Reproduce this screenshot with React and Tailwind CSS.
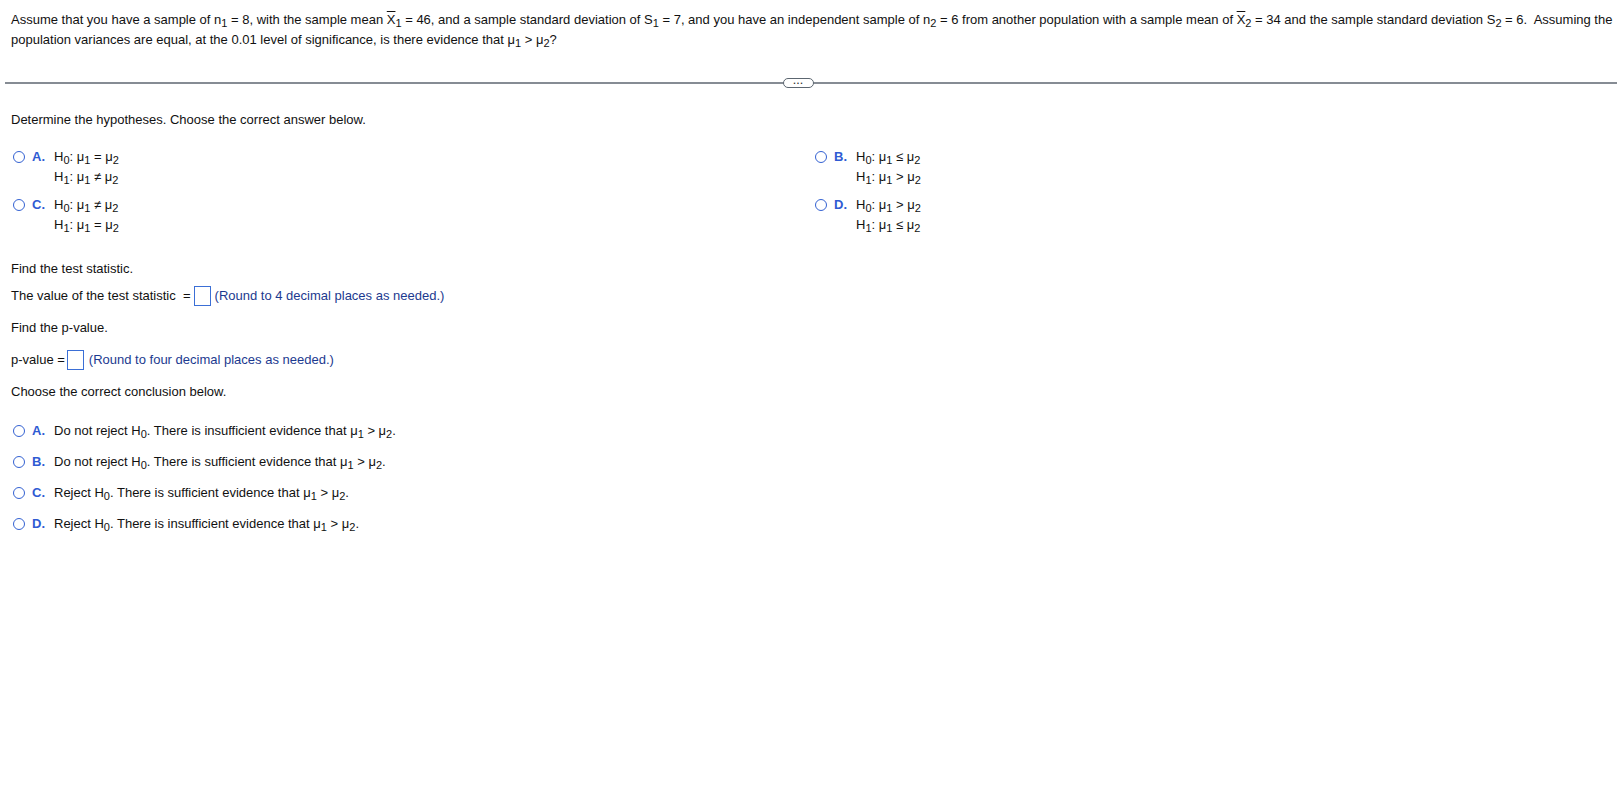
import React from "react";

const F = { fontFamily: '"Liberation Sans", Arial, sans-serif' };

function Sub({ children }) {
  return <sub className="text-[11px]">{children}</sub>;
}

function Mu({ n }) {
  return (
    <span>
      μ<Sub>{n}</Sub>
    </span>
  );
}

function Radio() {
  return (
    <span className="inline-block w-[12px] h-[12px] rounded-full border-[1.5px] border-[#3462d2] bg-white shrink-0" />
  );
}

function Hyp({ letter, h0, h1 }) {
  return (
    <div className="flex items-start">
      <div className="flex items-center h-[20px] pl-[2px]">
        <Radio />
        <span className="ml-[7px] w-[22px] font-bold text-[#2f5bd3]">{letter}.</span>
      </div>
      <div className="flex flex-col">
        <div className="h-[20px] leading-[20px]">
          H<Sub>0</Sub>:&nbsp;<Mu n="1" /> {h0} <Mu n="2" />
        </div>
        <div className="h-[20px] leading-[20px]">
          H<Sub>1</Sub>:&nbsp;<Mu n="1" /> {h1} <Mu n="2" />
        </div>
      </div>
    </div>
  );
}

function Concl({ letter, children }) {
  return (
    <div className="flex items-center h-[20px] pl-[2px]">
      <Radio />
      <span className="ml-[7px] w-[22px] font-bold text-[#2f5bd3]">{letter}.</span>
      <span>{children}</span>
    </div>
  );
}

function Box() {
  return <span className="inline-block w-[17px] h-[20px] border border-[#3b6fd6] bg-white align-middle" />;
}

export default function App() {
  return (
    <div className="w-[1622px] h-[792px] bg-white text-[13px] leading-[20px] text-[#111]" style={F}>
      <div className="pl-[11px] pr-[8px] pt-[10px]">
        <p>
          Assume that you have a sample of n<Sub>1</Sub> = 8, with the sample mean{" "}
          <span className="overline">X</span>
          <Sub>1</Sub> = 46, and a sample standard deviation of S<Sub>1</Sub> = 7, and you have an independent
          sample of n<Sub>2</Sub> = 6 from another population with a sample mean of{" "}
          <span className="overline">X</span>
          <Sub>2</Sub> = 34 and the sample standard deviation S<Sub>2</Sub> = 6.&nbsp; Assuming the population
          variances are equal, at the 0.01 level of significance, is there evidence that <Mu n="1" /> &gt;{" "}
          <Mu n="2" />?
        </p>
      </div>

      <div className="relative mt-[28px] mx-[5px] h-[10px] flex items-center">
        <div className="w-full h-[1.5px] bg-[#868c94]" />
        <div className="absolute left-[778px] top-[0px] w-[31px] h-[10px] rounded-full border border-[#5c6670] bg-white flex items-center justify-center">
          <span className="text-[9px] leading-[9px] font-bold text-[#333] tracking-[1px] -mt-[4px]">...</span>
        </div>
      </div>

      <div className="pl-[11px] pr-[11px]">
        <div className="mt-[22px]">Determine the hypotheses. Choose the correct answer below.</div>

        <div className="mt-[17px] grid grid-cols-2 gap-y-[8px]">
          <Hyp letter="A" h0="=" h1="≠" />
          <div className="pl-[2px]">
            <Hyp letter="B" h0="≤" h1=">" />
          </div>
          <Hyp letter="C" h0="≠" h1="=" />
          <div className="pl-[2px]">
            <Hyp letter="D" h0=">" h1="≤" />
          </div>
        </div>

        <div className="mt-[24px]">Find the test statistic.</div>
        <div className="mt-[7px] flex items-center h-[20px]">
          <span>The value of the test statistic&nbsp;&nbsp;=</span>
          <span className="ml-[3px]">
            <Box />
          </span>
          <span className="ml-[4px] text-[#1c3a8f]">(Round to 4 decimal places as needed.)</span>
        </div>

        <div className="mt-[12px]">Find the p-value.</div>
        <div className="mt-[12px] flex items-center h-[20px]">
          <span>p-value =</span>
          <span className="ml-[2px]">
            <Box />
          </span>
          <span className="ml-[5px] text-[#1c3a8f]">(Round to four decimal places as needed.)</span>
        </div>

        <div className="mt-[12px]">Choose the correct conclusion below.</div>

        <div className="mt-[19px] flex flex-col gap-[11px]">
          <Concl letter="A">
            Do not reject H<Sub>0</Sub>. There is insufficient evidence that <Mu n="1" /> &gt; <Mu n="2" />.
          </Concl>
          <Concl letter="B">
            Do not reject H<Sub>0</Sub>. There is sufficient evidence that <Mu n="1" /> &gt; <Mu n="2" />.
          </Concl>
          <Concl letter="C">
            Reject H<Sub>0</Sub>. There is sufficient evidence that <Mu n="1" /> &gt; <Mu n="2" />.
          </Concl>
          <Concl letter="D">
            Reject H<Sub>0</Sub>. There is insufficient evidence that <Mu n="1" /> &gt; <Mu n="2" />.
          </Concl>
        </div>
      </div>
    </div>
  );
}
